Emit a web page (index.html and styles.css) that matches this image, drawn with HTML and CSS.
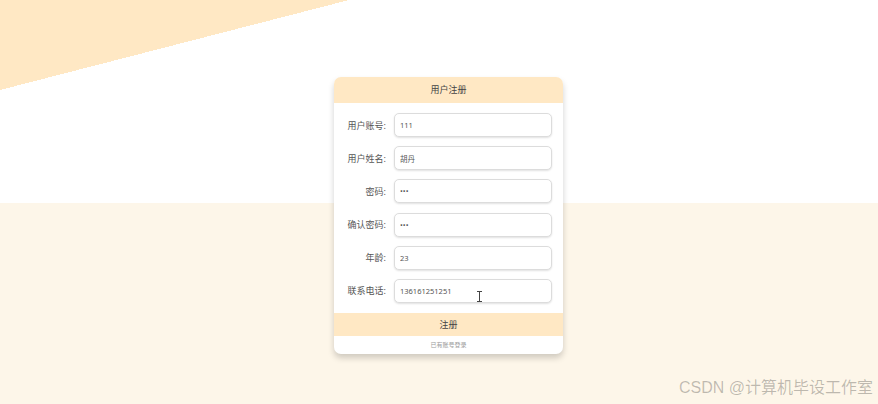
FILE: index.html
```html
<!DOCTYPE html>
<html lang="zh-CN">
<head>
    <meta charset="UTF-8">
    <meta name="viewport" content="width=device-width, initial-scale=1.0">
    <title>用户注册</title>
    <link rel="stylesheet" href="styles.css">
</head>
<body>

<div class="page">
    <div class="register-card">
        <div class="card-title">用户注册</div>
        <form class="register-form" onsubmit="return false">
            <div class="form-row">
                <label class="form-label">用户账号:</label>
                <input type="text" class="form-input" value="111">
            </div>
            <div class="form-row">
                <label class="form-label">用户姓名:</label>
                <input type="text" class="form-input" value="胡丹">
            </div>
            <div class="form-row">
                <label class="form-label">密码:</label>
                <input type="password" class="form-input" value="111">
            </div>
            <div class="form-row">
                <label class="form-label">确认密码:</label>
                <input type="password" class="form-input" value="111">
            </div>
            <div class="form-row">
                <label class="form-label">年龄:</label>
                <input type="text" class="form-input" value="23">
            </div>
            <div class="form-row">
                <label class="form-label">联系电话:</label>
                <input type="text" class="form-input" value="136161251251">
                <svg class="text-cursor" width="7" height="11" viewBox="0 0 7 11">
                    <path d="M1 0.5h5M3.5 0.5v10M1 10.5h5" stroke="#444" stroke-width="1" fill="none"/>
                </svg>
            </div>
        </form>
        <button type="button" class="submit-btn">注册</button>
        <a class="login-link">已有账号登录</a>
    </div>

    <div class="watermark">CSDN @计算机毕设工作室</div>
</div>

</body>
</html>
```

FILE: styles.css
```css
* {
    box-sizing: border-box;
}
body {
    margin: 0;
    font-family: "Noto Sans", "Noto Sans CJK SC", sans-serif;
    color: #555;
}
.page {
    position: relative;
    width: 878px;
    height: 404px;
    overflow: hidden;
    padding: 77px 0 0 334px;
    background:
        linear-gradient(to bottom right, #ffe8c4 50%, transparent 50%) 0 0 / 349px 90px no-repeat,
        linear-gradient(to bottom, #ffffff 203px, #fdf6e9 203px);
}
.register-card {
    width: 229px;
    background: white;
    border-radius: 7px;
    overflow: hidden;
    box-shadow: 0 4px 6px rgba(0, 0, 0, 0.18);
}
.card-title {
    height: 26px;
    line-height: 26px;
    background: #ffe8c4;
    text-align: center;
    font-size: 9px;
    color: #444;
}
.register-form {
    display: flex;
    flex-direction: column;
    gap: 9.2px;
    padding: 10px 11px 10px 0;
}
.form-row {
    position: relative;
    display: flex;
    align-items: center;
    gap: 8px;
}
.form-label {
    width: 52px;
    text-align: right;
    font-size: 9px;
    color: #555;
}
.form-input {
    flex: 1;
    height: 24px;
    padding: 0 5px;
    border: 1.5px solid #dcdcdc;
    border-radius: 5px;
    box-shadow: 0 1px 2px rgba(0, 0, 0, 0.12);
    font-family: "Noto Sans", "Noto Sans CJK SC", sans-serif;
    font-size: 7.5px;
    color: #555;
    outline: none;
}
.text-cursor {
    position: absolute;
    left: 142px;
    top: 12px;
}
.submit-btn {
    display: block;
    width: 100%;
    height: 23px;
    border: none;
    background: #ffe8c4;
    font-family: "Noto Sans", "Noto Sans CJK SC", sans-serif;
    font-size: 9px;
    color: #444;
    cursor: pointer;
}
.login-link {
    display: block;
    height: 18px;
    line-height: 18px;
    text-align: center;
    font-size: 6px;
    color: #999;
}
.watermark {
    position: absolute;
    right: 5px;
    bottom: 6px;
    font-family: "Liberation Sans", "Noto Sans CJK SC", sans-serif;
    font-size: 16px;
    color: rgba(0, 0, 0, 0.25);
}
```
